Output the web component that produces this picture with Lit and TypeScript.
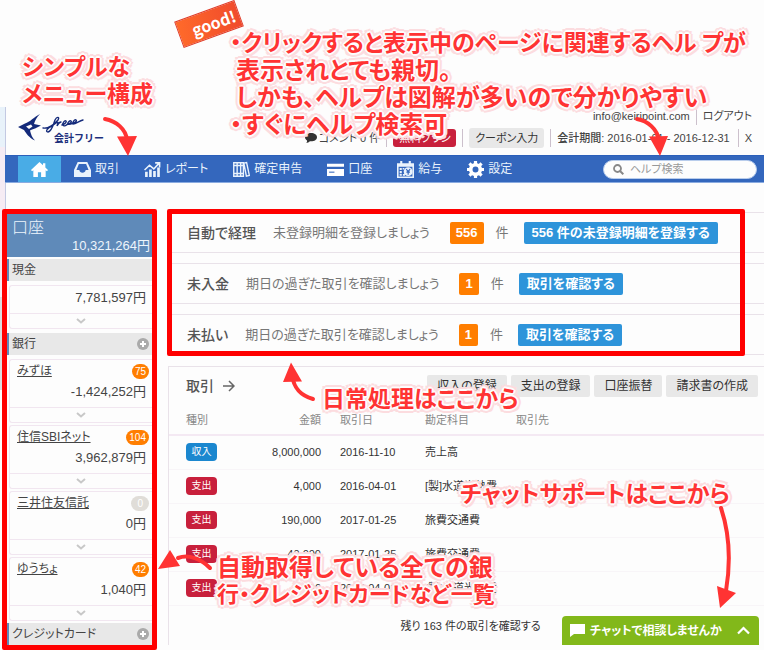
import { LitElement, html, css, svg } from "lit";
import { customElement } from "lit/decorators.js";
import { classMap } from "lit/directives/class-map.js";

const icons = {
  home: svg`<path fill="#fff" d="M8 1 0 8.4l1 1.2 1.2-1V15h4.3v-4.5h3V15h4.3V8.600l1.200 1 1-1.200-2.500-2.300V2h-2.200v2z"/>`,
  inbox: svg`<path fill="#eaf3fc" fill-rule="evenodd" d="M3.500 1h9L16 8.500V15H0V8.500zM4.600 2.800 2.300 8.500H5c.3 1.600 1.400 2.500 3 2.500s2.700-.9 3-2.500h2.700l-2.300-5.700z"/>`,
  chart: svg`<path fill="#eaf3fc" d="M1 10h2.500v5H1zM4.800 8h2.500v7H4.800zM8.600 9.500h2.500V15H8.600zM12.400 6h2.500v9h-2.500z"/><path fill="none" stroke="#eaf3fc" stroke-width="1.500" d="M.5 8.500 5.200 4l4 3.500 5-5.500M10.500 1.800h4.200V6"/>`,
  books: svg`<g fill="none" stroke="#eaf3fc" stroke-width="1.300"><path d="M.7 1.700h3.200v12.600H.7zM3.900 1.700h3.300v12.600H3.900zM7.200 1.700h2.600v12.600H7.200zM10.200 2l2.600-.5 2.600 12.100-2.800.7zM.7 4.200h9M.7 11.800h9"/></g>`,
  card: svg`<path fill="#fff" d="M0 2.500h16v3H0zM0 7.500h16V14H0z"/><path stroke="#3467bd" stroke-width="1" d="M2 10.500h5"/>`,
  payroll: svg`<path fill="#eaf3fc" fill-rule="evenodd" d="M0 2h3V0h2v2h6V0h2v2h3v14H0zM1.500 5.500v9h13v-9z"/><g fill="#eaf3fc"><path d="M2.500 6.500h2v2h-2zM2.500 9.500h2v2h-2zM2.500 12.200h2v1.600h-2zM5.500 12.200h2v1.600h-2zM5.300 6.500h1.500v1.500H5.300z"/><circle cx="10.500" cy="10" r="4.200"/></g><path fill="none" stroke="#3467bd" stroke-width="1.100" d="m8.700 7.500 1.800 2.500 1.800-2.500M10.500 10v3M8.800 10.500h3.400"/>`,
  gear: svg`<circle cx="8" cy="8" r="4.500" fill="none" stroke="#fff" stroke-width="3.400"/><g stroke="#fff" stroke-width="3"><path d="M8 0v3M8 13v3M0 8h3M13 8h3M2.300 2.300l2.200 2.200M11.500 11.500l2.200 2.200M2.300 13.700l2.200-2.200M11.500 4.500l2.200-2.200"/></g>`,
};

const nav: [keyof typeof icons, string][] = [
  ["inbox", "取引"],
  ["chart", "レポート"],
  ["books", "確定申告"],
  ["card", "口座"],
  ["payroll", "給与"],
  ["gear", "設定"],
];

const banks = [
  { name: "みずほ", count: 75, amount: "-1,424,252円" },
  { name: "住信SBIネット", count: 104, amount: "3,962,879円" },
  { name: "三井住友信託", count: 0, amount: "0円" },
  { name: "ゆうちょ", count: 42, amount: "1,040円" },
];

const tasks = [
  { title: "自動で経理", text: "未登録明細を登録しましょう", count: 556, action: "556 件の未登録明細を登録する" },
  { title: "未入金", text: "期日の過ぎた取引を確認しましょう", count: 1, action: "取引を確認する" },
  { title: "未払い", text: "期日の過ぎた取引を確認しましょう", count: 1, action: "取引を確認する" },
];

const deals = [
  { kind: "収入", amount: "8,000,000", date: "2016-11-10", item: "売上高" },
  { kind: "支出", amount: "4,000", date: "2016-04-01", item: "[製]水道光熱費" },
  { kind: "支出", amount: "190,000", date: "2017-01-25", item: "旅費交通費" },
  { kind: "支出", amount: "40,000", date: "2017-01-25", item: "旅費交通費" },
  { kind: "支出", amount: "4,000", date: "2017-04-01", item: "[製]水道光熱費" },
];

@customElement("app-root")
export class AppRoot extends LitElement {
  static styles = css`
    :host {
      display: block;
      position: relative;
      min-height: 650px;
      overflow: hidden;
      background: #fdfdfd;
      color: #444;
      font: 12px/16px "Liberation Sans", "Noto Sans CJK JP", sans-serif;
      font-feature-settings: "palt";
    }
    * { box-sizing: border-box; }
    button, input { font: inherit; font-feature-settings: inherit; border: 0; margin: 0; }
    button { white-space: nowrap; cursor: pointer; }
    a { color: inherit; text-decoration: none; }
    svg { display: block; flex: none; }

    .edge {
      position: absolute; left: 0; top: 107px; width: 6px; height: 283px;
      background: linear-gradient(#e8f2fa 0 40px, #f6ecf4 40px 190px, #dcdcde 190px);
      border-right: 1px solid #c3c9e2;
    }
    .shell { padding-left: 5px; position: relative; }

    header { display: flex; justify-content: space-between; padding: 107px 12px 5px 13px; height: 155px; }
    .logo { margin-top: 7px; display: flex; }
    .brand { display: flex; flex-direction: column; width: 62px; margin-left: -4px; }
    .brand b { font: bold 10px/11px "Noto Sans CJK JP", sans-serif; color: #1c2f7c; margin-top: -2px; text-align: right; }
    .account { display: flex; flex-direction: column; align-items: flex-end; gap: 4px; white-space: nowrap; font-size: 11px; }
    .line { display: flex; align-items: center; gap: 6px; height: 18px; }
    .line i { width: 1px; height: 18px; background: #ccc0cc; }
    .comments { display: flex; align-items: center; gap: 2px; }
    .plan { background: #c8203c; color: #fff; border-radius: 3px; height: 18px; padding: 0 6px; line-height: 18px; width: 63px; }
    .coupon { background: #e8e8e8; color: #333; border-radius: 3px; height: 20px; padding: 0; width: 75px; }
    .period { padding-right: 2px; }
    .period b { font-weight: 500; margin-right: 3px; }

    nav {
      display: flex; align-items: center; height: 28px; padding: 0 7px 0 13px; gap: 25px;
      background: #3467bd; border-bottom: 1px solid #8aabe0; border-top: 1px solid #2b5fba; color: #eaf3fc;
    }
    nav a { display: flex; align-items: center; gap: 4px; height: 26px; white-space: nowrap; }
    nav .home { background: #49ace6; width: 43px; justify-content: center; margin-right: -12px; }
    .search {
      display: flex; align-items: center; gap: 6px; margin-left: auto; width: 154px; height: 19px;
      background: #fdfdfd; border-radius: 10px; padding: 0 9px; border: 1px solid #b9cdec; font-size: 11px;
    }
    .search input { background: none; min-width: 0; flex: 1; padding: 0; outline: 0; height: 16px; }
    .search input::placeholder { color: #999; opacity: 1; }

    .body { display: flex; align-items: flex-start; margin-top: 26px; }
    aside { flex: none; width: 155px; margin-left: -3px; border: 5px solid #f00; border-radius: 2px; overflow: hidden; }
    .total { background: #5f8ab9; color: #eef5fc; height: 43px; padding: 4px 2px 4px 5px; margin-bottom: 2px; }
    .total h2 { font-size: 16px; line-height: 19px; font-weight: 300; margin: 0; }
    .total p { margin: 0; text-align: right; font-size: 13px; line-height: 18px; }
    h3 {
      display: flex; align-items: center; justify-content: space-between; height: 22px; margin: 0 0 4px;
      padding: 0 3px; background: #e8e8e8; border-left: 2px solid #5f8ab9; font-weight: 400; font-size: 12px;
    }
    h3:last-child { margin-bottom: 0; }
    .acct { border: 1px solid #f1e6f0; border-right: 0; border-radius: 3px 0 0 3px; margin: 0 0 2px 2px; background: #fdfdfd; }
    .top { display: flex; justify-content: space-between; align-items: center; height: 20px; padding: 2px 3px 0 7px; }
    .top a { text-decoration: underline; font-size: 12px; }
    .count { background: #ff7e00; color: #fff; border-radius: 8px; font-size: 10px; line-height: 15px; height: 15px; padding: 0 3px; }
    .count.zero { background: #e0ddd8; padding: 0 6px; }
    .amt { text-align: right; font-size: 13px; line-height: 18px; padding: 3px 6px 0 0; height: 27px; }
    .more { border-top: 1px solid #f1e6f0; height: 15px; display: flex; justify-content: center; align-items: center; }
    .last { margin-bottom: 4px; }

    main { flex: 1; min-width: 0; margin-left: 11px; position: relative; padding-top: 3px; }
    .frame { position: absolute; left: -1px; right: 19px; top: 0; height: 147px; border: 5px solid #f00; border-radius: 2px; }
    .task {
      display: flex; align-items: center; height: 41px; margin-bottom: 10px; padding-left: 18px;
      border: 1px solid #e9e2e9; border-right: 0; font-size: 13px; color: #777; white-space: nowrap;
    }
    .task h4 { margin: 0 17px 0 0; font-size: 14px; color: #555; font-weight: 500; }
    .num { margin: 0 12px 0 20px; background: #ff7e00; color: #fff; font-weight: 700; height: 22px; line-height: 22px; padding: 0 6px; border-radius: 2px; font-size: 13px; }
    .go { margin-left: 15px; height: 22px; padding: 0 8px; border-radius: 2px; background: #2e94da; color: #fff; font-weight: 700; font-size: 13px; }

    .deals { border: 1px solid #e9e2e9; border-right: 0; border-bottom: 0; height: 279px; margin-top: 11px; }
    .bar { display: flex; align-items: center; gap: 4px; padding: 8px 6px 0 17px; height: 30px; }
    .bar h2 { display: flex; align-items: center; gap: 9px; margin: 0 auto 0 0; font-size: 14px; font-weight: 500; color: #555; }
    .bar button { height: 22px; padding: 0 10px; background: #e8e8e8; color: #333; border-radius: 2px; }
    table { border-collapse: collapse; width: 100%; table-layout: fixed; font-size: 11px; white-space: nowrap; }
    th { font-weight: 400; color: #888; text-align: left; height: 38px; padding: 8px 0 0; border-bottom: 2px solid #f4e9f3; }
    td { height: 34px; padding: 0; border-bottom: 1px solid #f8f5f8; color: #333; }
    tr > :first-child { padding-left: 17px; width: 78px; }
    tr > :nth-child(2) { text-align: right; width: 74px; }
    tr > :nth-child(3) { padding-left: 19px; width: 104px; }
    tr > :nth-child(4) { width: 91px; }
    .kind { display: inline-block; width: 31px; height: 18px; line-height: 18px; text-align: center; border-radius: 4px; background: #c8203c; color: #fff; font-size: 10px; }
    .kind.in { background: #1b87cf; }
    .rest { display: block; text-align: center; margin-top: 12px; padding-left: 8px; color: #333; font-size: 11px; }

    .chat {
      position: absolute; right: 5px; bottom: 5px; width: 197px; height: 29px; padding: 0 9px 0 8px;
      display: flex; align-items: center; gap: 5px; border-radius: 4px 4px 0 0; background: #82b81a; color: #fff; font-weight: 700; font-size: 12px;
    }
    .chat span { flex: 1; text-align: left; }

    .note {
      position: absolute; margin: 0; white-space: nowrap; color: #ff3333;
      font: bold 23px/27px "Noto Sans CJK JP", sans-serif;
      font-feature-settings: "palt";
      text-shadow: 1px 1px #fdfdfd, -1px -1px #fdfdfd, 1px -1px #fdfdfd, -1px 1px #fdfdfd, 2px 0 #fdfdfd, -2px 0 #fdfdfd, 0 2px #fdfdfd, 0 -2px #fdfdfd,
        3px 3px #fcdcdf, -3px -3px #fcdcdf, 3px -3px #fcdcdf, -3px 3px #fcdcdf, 4px 0 #fcdcdf, -4px 0 #fcdcdf, 0 4px #fcdcdf, 0 -4px #fcdcdf;
    }
    .note span { display: block; }
    .note .big { font-size: 24px; }
    .note .slim { font-size: 22px; }
    .note .indent { padding-left: 6px; }
    .menu { left: 22px; top: 52px; }
    .help { left: 230px; top: 28px; }
    .daily { left: 322px; top: 384px; }
    .support { left: 460px; top: 479px; }
    .list { left: 217px; top: 552px; }
    .good {
      position: absolute; left: 177px; top: 10px; width: 64px; height: 28px; transform: rotate(-20deg);
      background: linear-gradient(100deg, #ff6a2a, #f04a2c); border: 1px solid #e03c28; color: #fff;
      font: bold 16px/26px "Noto Sans CJK JP", sans-serif; padding-left: 13px;
    }
    .arrows { position: absolute; left: 0; top: 0; pointer-events: none; }
  `;

  private icon(body: unknown, size = 17) {
    return html`<svg width=${size} height=${size} viewBox="0 0 16 16" aria-hidden="true">${body}</svg>`;
  }

  private chevron() {
    return html`<svg width="10" height="6" viewBox="0 0 10 6"><path d="m1 1 4 3.500 4-3.500" fill="none" stroke="#c8c8c8" stroke-width="2"/></svg>`;
  }

  private plus() {
    return html`<svg width="12" height="12" viewBox="0 0 12 12"><circle cx="6" cy="6" r="6" fill="#aaa"/><path d="M6 3v6M3 6h6" stroke="#fff" stroke-width="2"/></svg>`;
  }

  render() {
    return html`
      <div class="edge"></div>
      <div class="shell">
        <header>
          <a class="logo" href="#" aria-label="freee 会計フリー">
            <svg width="28" height="28" viewBox="0 0 28 28">
              <path fill="#142a7a" d="M0 13 7 9.500C12 8 16 3 22 0c-3 3-5 6-6 10l7 1.500-6 3c-2 1-4 1-5 2 1 4 2 7 5 10C11 24 8 19 6 16z"/>
              <path fill="#fdfdfd" d="m8 12.500 5-2 1.500 2-3.500 2.500z"/>
            </svg>
            <span class="brand">
              <svg width="44" height="20" viewBox="0 0 44 20">
                <g fill="none" stroke="#142a7a" stroke-width="1.400" stroke-linecap="round">
                  <path d="M1 14c5 1 12-4 15-8 2-3-1-4-3 0-2 5-3 11-7 12-3 0-1-4 4-6l4-3c1-1 2-1 2 0l-1 3c1-2 2-4 4-4"/>
                  <path d="M20 11c3-1 5-3 4-4s-4 2-3 4 3 0 5-1c3-1 4-2 3-3s-4 2-3 3 3 0 5-1c3-1 4-2 3-3s-4 2-3 4c3 0 6-3 10-4"/>
                </g>
              </svg>
              <b>会計フリー</b>
            </span>
          </a>
          <div class="account">
            <div class="line"><span>info@keiripoint.com</span><i></i><a href="#">ログアウト</a></div>
            <div class="line">
              <a class="comments" href="#">
                <svg width="12" height="10" viewBox="0 0 12 10"><path fill="#333" d="M6 0c3.500 0 6 1.800 6 4.200S9.500 8.300 6 8.300L4.800 8.200C4 9.200 2.500 9.800 1.200 9.800 2 9 2.200 8.200 2 7.400.8 6.600 0 5.500 0 4.200 0 1.800 2.500 0 6 0z"/></svg>
                コメント 0 件</a><i></i>
              <button class="plan">無料プラン</button><i></i>
              <button class="coupon">クーポン入力</button><i></i>
              <span class="period"><b>会計期間:</b>2016-01-01 - 2016-12-31</span><i></i>
              <a href="#">X</a>
            </div>
          </div>
        </header>

        <nav>
          <a class="home" href="#" aria-label="ホーム">${this.icon(icons.home)}</a>
          ${nav.map(([key, label]) => html`<a href="#">${this.icon(icons[key])}${label}</a>`)}
          <label class="search">
            <svg width="11" height="11" viewBox="0 0 11 11"><circle cx="4.500" cy="4.500" r="3.500" fill="none" stroke="#888" stroke-width="1.800"/><path d="m7 7 3.300 3.300" stroke="#888" stroke-width="2"/></svg>
            <input type="search" placeholder="ヘルプ検索" aria-label="ヘルプ検索" />
          </label>
        </nav>

        <div class="body">
          <aside>
            <div class="total"><h2>口座</h2><p>10,321,264円</p></div>
            <h3>現金</h3>
            <div class="acct last"><div class="amt">7,781,597円</div><div class="more">${this.chevron()}</div></div>
            <h3>銀行 ${this.plus()}</h3>
            ${banks.map(
              (b) => html`<div class="acct">
                <div class="top"><a href="#">${b.name}</a><span class=${classMap({ count: true, zero: !b.count })}>${b.count}</span></div>
                <div class="amt">${b.amount}</div>
                <div class="more">${this.chevron()}</div>
              </div>`
            )}
            <h3>クレジットカード ${this.plus()}</h3>
          </aside>

          <main>
            ${tasks.map(
              (t) => html`<section class="task">
                <h4>${t.title}</h4><span>${t.text}</span><span class="num">${t.count}</span>件<button class="go">${t.action}</button>
              </section>`
            )}
            <div class="frame"></div>
            <section class="deals">
              <div class="bar">
                <h2>取引
                  <svg width="12" height="12" viewBox="0 0 12 12"><path d="M0 6h11M6 1l5 5-5 5" fill="none" stroke="#666" stroke-width="1.500"/></svg>
                </h2>
                <button>収入の登録</button><button>支出の登録</button><button>口座振替</button><button>請求書の作成</button>
              </div>
              <table>
                <thead><tr><th>種別</th><th>金額</th><th>取引日</th><th>勘定科目</th><th>取引先</th></tr></thead>
                <tbody>
                  ${deals.map(
                    (d) => html`<tr>
                      <td><span class=${classMap({ kind: true, in: d.kind === "収入" })}>${d.kind}</span></td>
                      <td>${d.amount}</td><td>${d.date}</td><td>${d.item}</td><td></td>
                    </tr>`
                  )}
                </tbody>
              </table>
              <a class="rest" href="#">残り 163 件の取引を確認する</a>
            </section>
          </main>
        </div>
      </div>

      <button class="chat">
        <svg width="15" height="13" viewBox="0 0 15 13"><path fill="#fff" d="M0 0h15v10H4l-4 3z"/></svg>
        <span>チャットで相談しませんか</span>
        <svg width="13" height="9" viewBox="0 0 13 9"><path d="m1 7.500 5.500-5.500L12 7.500" fill="none" stroke="#fff" stroke-width="2.200"/></svg>
      </button>

      <div class="good">good!</div>
      <p class="note menu">シンプルな<br />メニュー構成</p>
      <p class="note help">
        <span>・クリックすると表示中のページに関連するヘル プが</span>
        <span class="big indent">表示されとても親切。</span>
        <span class="big indent">しかも、ヘルプは図解が多いので分かりやすい</span>
        <span class="big">・すぐにヘルプ検索可</span>
      </p>
      <p class="note daily">日常処理はここから</p>
      <p class="note support">チャットサポートはここから</p>
      <p class="note list"><span class="big">自動取得している全ての銀</span><span class="slim">行・クレジットカードなど一覧</span></p>
      <svg class="arrows" width="764" height="650" viewBox="0 0 764 650" aria-hidden="true">
        <g fill="none" stroke="#ff3333" stroke-width="4" stroke-linecap="round">
          <path d="M105 119c11 2 21 10 22 21"/>
          <path d="M637 119c11 2 20 10 22 21"/>
          <path d="M313 399c-11-3-19-9-21-24"/>
          <path d="M210 568c-9-9-21-14-32-10"/>
          <path d="M721 508c8 24 10 53 5 83"/>
        </g>
        <path fill="#ff3333" d="M117 136.500 137 136l-9 20zM649 136.500 668 136l-8 20zM291 362.500l11 19-19 .5zM158 569l12-19 10 16zM717 586l19 7-16 15z"/>
      </svg>
    `;
  }
}
